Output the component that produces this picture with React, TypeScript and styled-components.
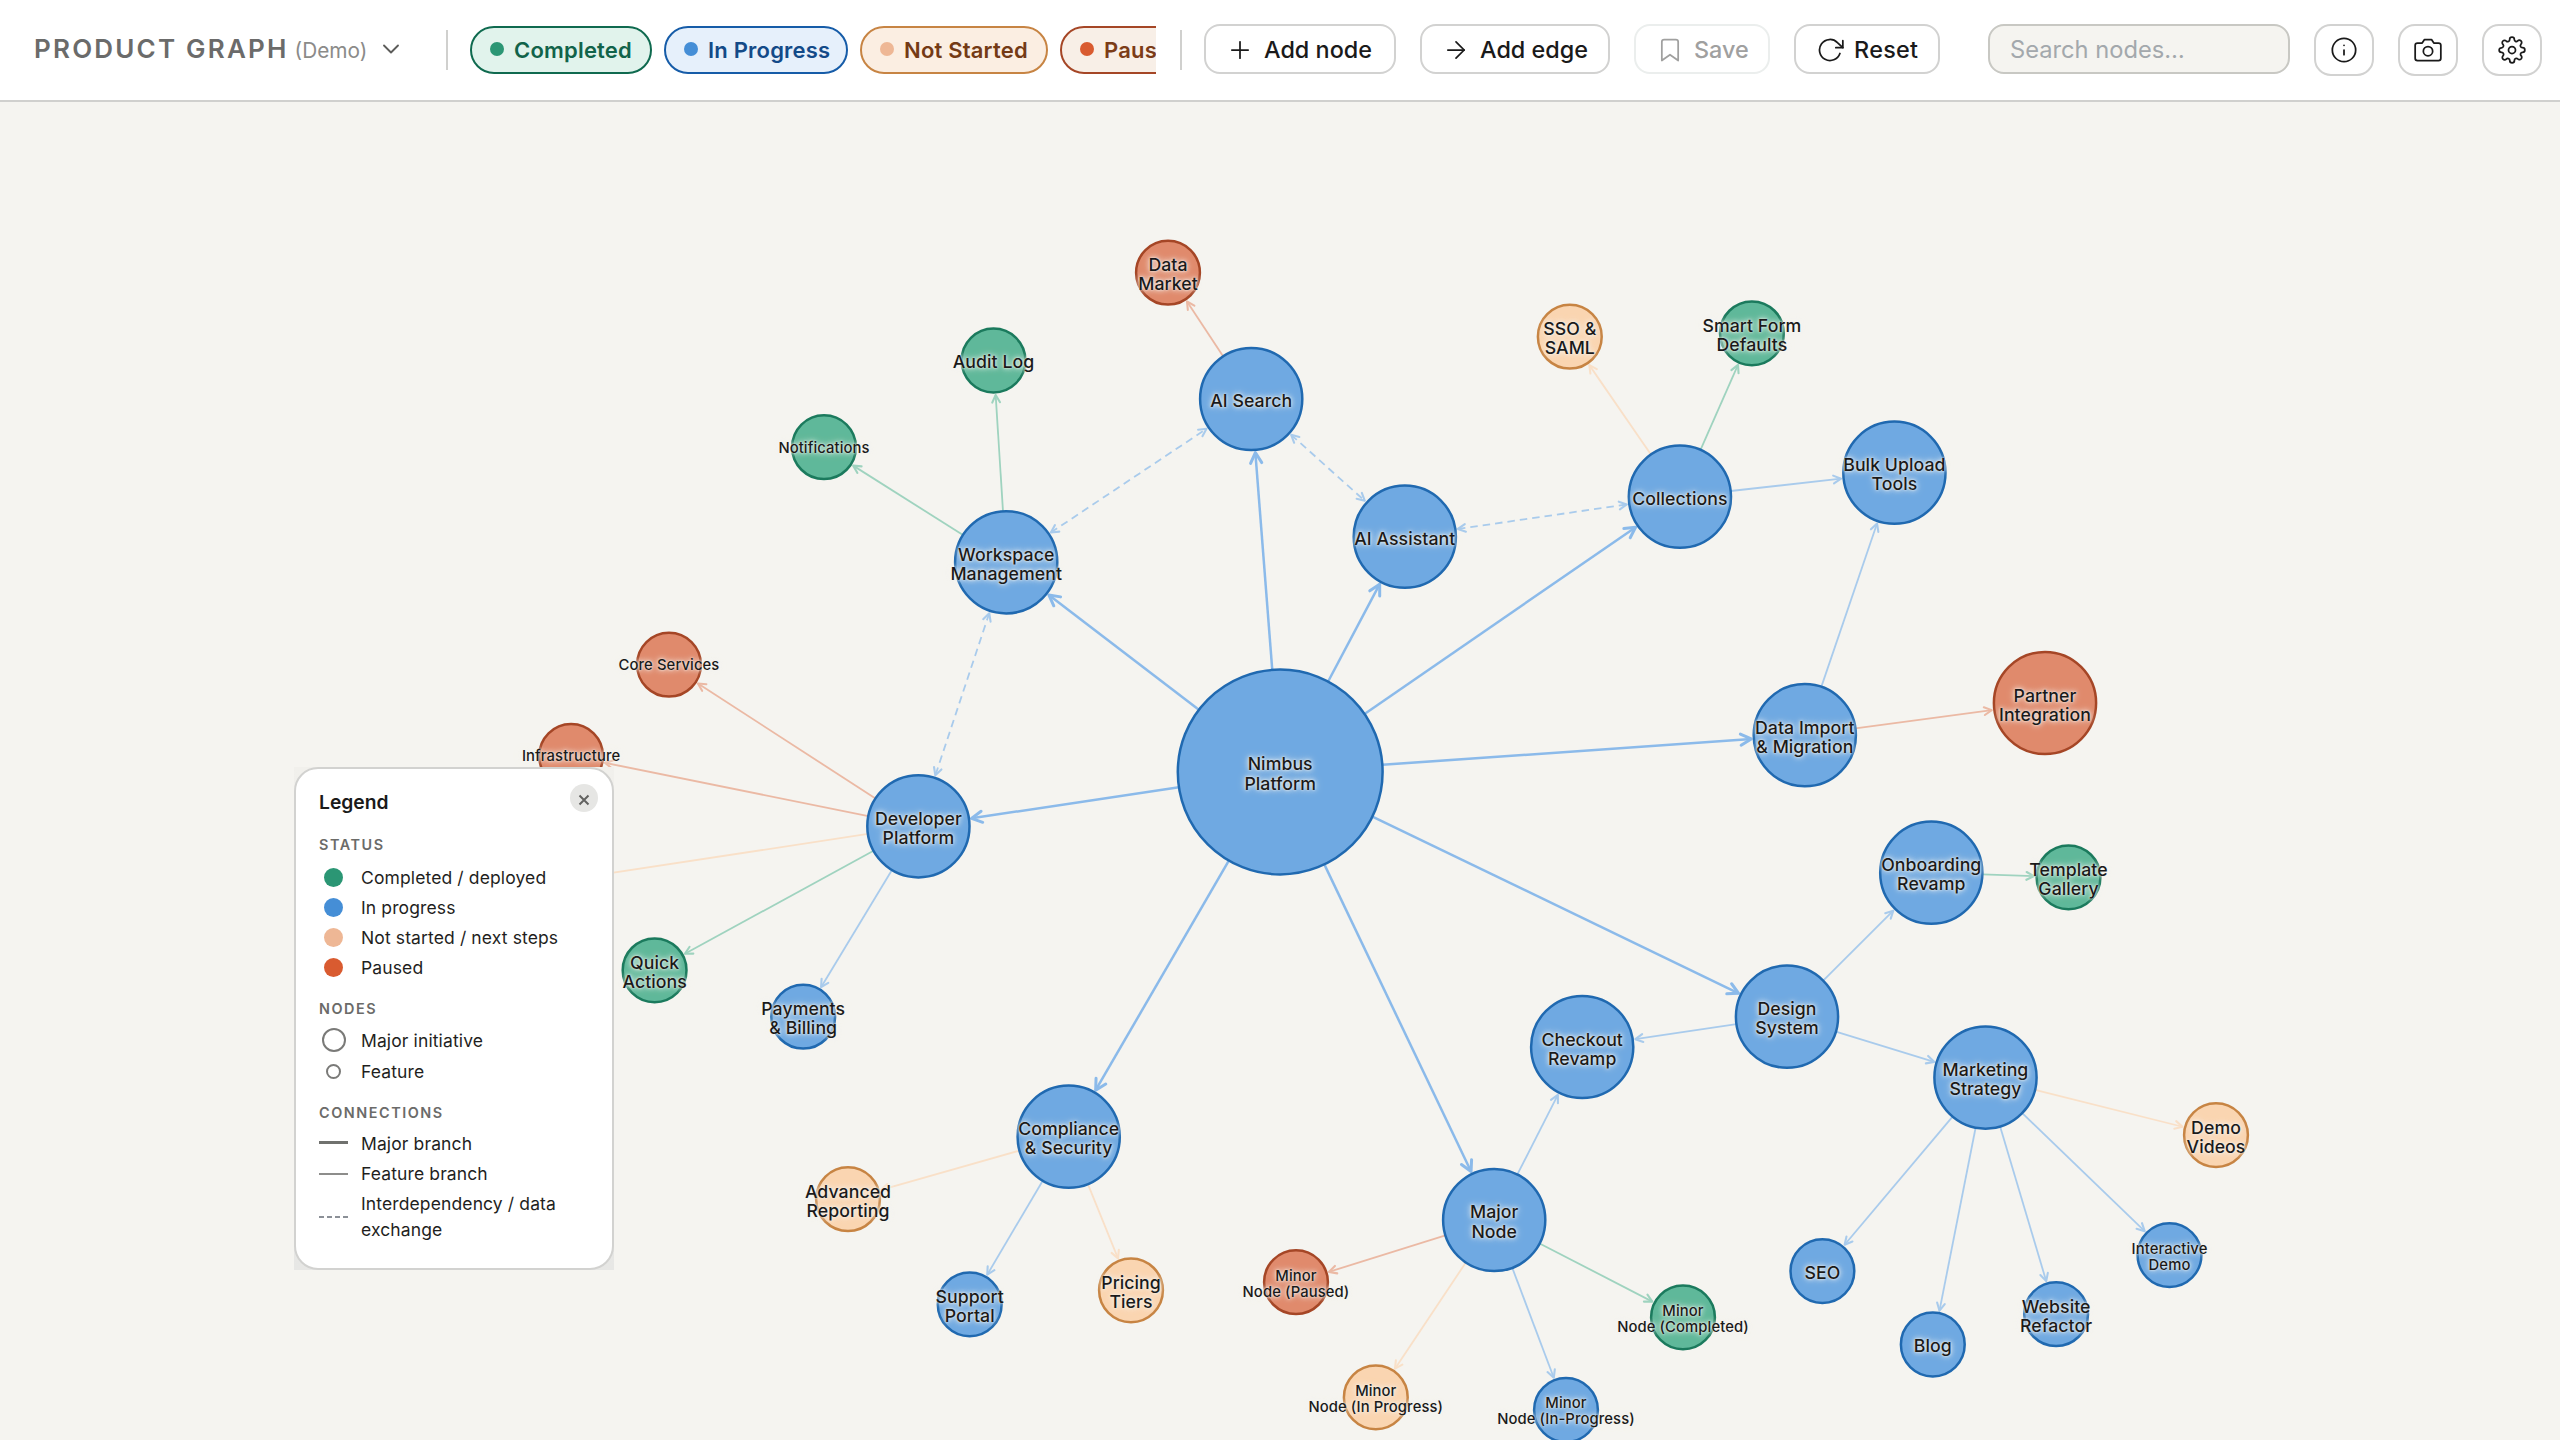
import React from "react";
import styled, { createGlobalStyle, css } from "styled-components";
import {
  FiArrowRight,
  FiBookmark,
  FiCamera,
  FiChevronDown,
  FiInfo,
  FiPlus,
  FiRotateCw,
  FiSettings,
} from "react-icons/fi";

type Status = "done" | "progress" | "todo" | "paused";
type Size = "root" | "major" | "minor";

const HEADER = 102;

const node: Record<Status, { fill: string; stroke: string; edge: string }> = {
  done: { fill: "#5fb89a", stroke: "#1b7a5d", edge: "#9fd3bf" },
  progress: { fill: "#6fa9e2", stroke: "#2069b0", edge: "#a9cbec" },
  todo: { fill: "#fad5b1", stroke: "#c78443", edge: "#f9e0c8" },
  paused: { fill: "#e08a6c", stroke: "#a54626", edge: "#ebb9a4" },
};

const dotColor: Record<Status, string> = {
  done: "#2b9674",
  progress: "#458ed6",
  todo: "#eeb795",
  paused: "#d95b30",
};

const chipTheme: Record<Status, { bg: string; line: string; text: string }> = {
  done: { bg: "#e1f3ec", line: "#0f6a4f", text: "#11634a" },
  progress: { bg: "#e6f0fb", line: "#165ca8", text: "#134a88" },
  todo: { bg: "#fbeee2", line: "#c78443", text: "#743a15" },
  paused: { bg: "#f8efe7", line: "#a54626", text: "#7c3c17" },
};

const radius: Record<Size, number> = { root: 102.4, major: 51.1, minor: 31.9 };

interface GraphNode {
  id: string;
  x: number;
  y: number;
  size: Size;
  status: Status;
  lines: string[];
  small?: boolean;
  lead?: number;
}

const n = (
  id: string,
  x: number,
  y: number,
  size: Size,
  status: Status,
  label: string,
  extra: { small?: boolean; lead?: number } = {}
): GraphNode => ({ id, x, y, size, status, lines: label.split("|"), ...extra });

const nodes: GraphNode[] = [
  n("root", 1280.2, 772, "root", "progress", "Nimbus|Platform", { lead: 20 }),
  n("search", 1251.2, 399, "major", "progress", "AI Search"),
  n("workspace", 1006.2, 562.3, "major", "progress", "Workspace|Management"),
  n("assistant", 1404.8, 536.7, "major", "progress", "AI Assistant"),
  n("collections", 1679.9, 496.7, "major", "progress", "Collections"),
  n("bulk", 1894.4, 472.7, "major", "progress", "Bulk Upload|Tools"),
  n("import", 1804.8, 735.2, "major", "progress", "Data Import|& Migration"),
  n("partner", 2045, 703, "major", "paused", "Partner|Integration"),
  n("dev", 918.4, 826.3, "major", "progress", "Developer|Platform"),
  n("compliance", 1068.7, 1136.7, "major", "progress", "Compliance|& Security"),
  n("majorNode", 1494.2, 1220, "major", "progress", "Major|Node", { lead: 20 }),
  n("checkout", 1582.2, 1047, "major", "progress", "Checkout|Revamp"),
  n("design", 1787, 1016.7, "major", "progress", "Design|System"),
  n("onboarding", 1931.3, 872.7, "major", "progress", "Onboarding|Revamp"),
  n("marketing", 1985.5, 1077.6, "major", "progress", "Marketing|Strategy"),
  n("market", 1168, 272.7, "minor", "paused", "Data|Market"),
  n("audit", 993.5, 360.5, "minor", "done", "Audit Log"),
  n("notifications", 824, 447.2, "minor", "done", "Notifications", { small: true }),
  n("sso", 1569.8, 336.7, "minor", "todo", "SSO &|SAML"),
  n("smart", 1751.9, 333.3, "minor", "done", "Smart Form|Defaults"),
  n("core", 669, 664.7, "minor", "paused", "Core Services", { small: true }),
  n("infra", 571.1, 755.9, "minor", "paused", "Infrastructure", { small: true }),
  n("api", 479, 893, "minor", "todo", ""),
  n("quick", 654.6, 970.3, "minor", "done", "Quick|Actions"),
  n("payments", 803.2, 1016.7, "minor", "progress", "Payments|& Billing"),
  n("reporting", 848, 1199.2, "minor", "todo", "Advanced|Reporting"),
  n("support", 969.7, 1304.4, "minor", "progress", "Support|Portal"),
  n("pricing", 1131, 1290.3, "minor", "todo", "Pricing|Tiers"),
  n("mPaused", 1296, 1282.2, "minor", "paused", "Minor|Node (Paused)", { small: true }),
  n("mTodo", 1375.8, 1397.4, "minor", "todo", "Minor|Node (In Progress)", { small: true }),
  n("mProgress", 1566, 1410, "minor", "progress", "Minor|Node (In-Progress)", { small: true }),
  n("mDone", 1683, 1317.4, "minor", "done", "Minor|Node (Completed)", { small: true }),
  n("template", 2068.5, 877.3, "minor", "done", "Template|Gallery"),
  n("videos", 2216, 1135.1, "minor", "todo", "Demo|Videos"),
  n("interactive", 2169.5, 1255.1, "minor", "progress", "Interactive|Demo", { small: true }),
  n("seo", 1822.4, 1271.1, "minor", "progress", "SEO"),
  n("blog", 1932.8, 1344.5, "minor", "progress", "Blog"),
  n("website", 2056.1, 1314.2, "minor", "progress", "Website|Refactor"),
];

const byId = Object.fromEntries(nodes.map((item) => [item.id, item]));

const majorEdges = ["search", "workspace", "assistant", "collections", "import", "dev", "compliance", "majorNode", "design"];

const featureEdges: [string, string][] = [
  ["search", "market"],
  ["workspace", "audit"],
  ["workspace", "notifications"],
  ["collections", "sso"],
  ["collections", "smart"],
  ["collections", "bulk"],
  ["import", "bulk"],
  ["import", "partner"],
  ["dev", "core"],
  ["dev", "infra"],
  ["dev", "api"],
  ["dev", "quick"],
  ["dev", "payments"],
  ["compliance", "reporting"],
  ["compliance", "support"],
  ["compliance", "pricing"],
  ["majorNode", "mPaused"],
  ["majorNode", "mTodo"],
  ["majorNode", "mProgress"],
  ["majorNode", "mDone"],
  ["majorNode", "checkout"],
  ["design", "checkout"],
  ["design", "onboarding"],
  ["design", "marketing"],
  ["onboarding", "template"],
  ["marketing", "videos"],
  ["marketing", "interactive"],
  ["marketing", "website"],
  ["marketing", "blog"],
  ["marketing", "seo"],
];

const dependencyEdges: [string, string][] = [
  ["workspace", "search"],
  ["search", "assistant"],
  ["assistant", "collections"],
  ["workspace", "dev"],
];

const GlobalStyle = createGlobalStyle`
  * { box-sizing: border-box; }
  html, body { margin: 0; padding: 0; overflow: hidden; background: #f5f4f0; }
  body { font-family: Inter, "Liberation Sans", sans-serif; color: #1a1a1a; }
  button, input { font-family: inherit; margin: 0; }
`;

const Page = styled.div`
  display: flex;
  flex-direction: column;
  width: 2560px;
  height: 1440px;
  overflow: hidden;
  background: #f5f4f0;
`;

const Header = styled.header`
  display: flex;
  align-items: center;
  flex: none;
  height: ${HEADER}px;
  padding: 0 18px 0 34px;
  background: #fff;
  border-bottom: 2px solid #d0d0ce;
`;

const Brand = styled.div`
  display: flex;
  align-items: center;
  flex: none;
  width: 412px;
  padding-bottom: 3px;
  color: #6b6b6a;
  svg { width: 28px; height: 28px; stroke-width: 1.6; color: #5c5c5a; margin-left: 10px; }
`;

const BrandText = styled.div`
  display: flex;
  align-items: baseline;
  white-space: nowrap;
`;

const BrandName = styled.h1`
  margin: 0;
  font-size: 26px;
  line-height: 32px;
  font-weight: 600;
  letter-spacing: 2.2px;
`;

const BrandNote = styled.span`
  margin-left: 6px;
  font-size: 20.8px;
  color: #8b8b89;
`;

const Divider = styled.i`
  flex: none;
  width: 2px;
  height: 40px;
  background: #d0d0ce;
`;

const Chips = styled.div`
  display: flex;
  gap: 12px;
  flex: none;
  width: 686px;
  margin: 0 24px 0 22px;
  overflow: hidden;
`;

const Chip = styled.button<{ $status: Status; $width: number }>`
  display: flex;
  align-items: center;
  gap: 10px;
  flex: none;
  width: ${(p) => p.$width}px;
  height: 48px;
  padding: 0 0 1px 18px;
  border: 2px solid ${(p) => chipTheme[p.$status].line};
  border-radius: 24px;
  background: ${(p) => chipTheme[p.$status].bg};
  color: ${(p) => chipTheme[p.$status].text};
  font-size: 22px;
  font-weight: 600;
  letter-spacing: 0.2px;
  white-space: nowrap;
`;

const Dot = styled.i<{ $status: Status; $size: number }>`
  flex: none;
  width: ${(p) => p.$size}px;
  height: ${(p) => p.$size}px;
  margin-bottom: 1px;
  border-radius: 50%;
  background: ${(p) => dotColor[p.$status]};
`;

const Actions = styled.div`
  display: flex;
  gap: 24px;
  flex: none;
  margin-left: 22px;
`;

const ActionButton = styled.button<{ $width: number; $muted?: boolean; $tracking?: number }>`
  display: flex;
  align-items: center;
  gap: 10px;
  flex: none;
  width: ${(p) => p.$width}px;
  height: 50px;
  margin-bottom: 2px;
  padding: 0 0 0 20px;
  border: 2px solid ${(p) => (p.$muted ? "#ebeeed" : "#d2d2d1")};
  border-radius: 16px;
  background: #fff;
  color: ${(p) => (p.$muted ? "#a0a09f" : "#1a1a1a")};
  font-size: 23.4px;
  font-weight: 500;
  letter-spacing: ${(p) => p.$tracking ?? 0}px;
  white-space: nowrap;
  svg { flex: none; width: 28px; height: 28px; margin-top: 2px; stroke-width: 1.5; }
`;

const Search = styled.input`
  flex: none;
  width: 302px;
  height: 50px;
  margin: 0 24px 2px 48px;
  padding: 0 20px;
  border: 2px solid #c8c8c3;
  border-radius: 16px;
  background: #f5f4f0;
  font-size: 23.7px;
  outline: none;
  &::placeholder { color: #a3a8ac; opacity: 1; }
`;

const IconButton = styled.button`
  display: grid;
  place-items: center;
  flex: none;
  width: 60px;
  height: 52px;
  padding: 0;
  border: 2px solid #d2d2d1;
  border-radius: 17px;
  background: #fff;
  color: #1a1a1a;
  & + & { margin-left: 24px; }
  svg { width: 28px; height: 28px; stroke-width: 1.5; }
`;

const Canvas = styled.main`
  position: relative;
  flex: 1;
  overflow: hidden;
`;

const GraphLayer = styled.svg`
  display: block;
  width: 2560px;
  height: ${1440 - HEADER}px;
`;

const NodeLabel = styled.div<{ $small?: boolean; $lead: number }>`
  position: absolute;
  transform: translate(-50%, -50%);
  text-align: center;
  white-space: nowrap;
  font-weight: 500;
  font-size: ${(p) => (p.$small ? 14.8 : 17.7)}px;
  line-height: ${(p) => p.$lead}px;
  letter-spacing: ${(p) => (p.$small ? 0.1 : 0.06)}px;
  color: #1a1a1a;
  text-shadow:
    0 0 2px #f5f4f0,
    0 0 5px #f5f4f0,
    0 0 8px rgba(245, 244, 240, 0.7);
`;

const LegendFrame = styled.aside`
  position: absolute;
  left: 294px;
  top: ${767 - HEADER}px;
  width: 320px;
  height: 503px;
  background: linear-gradient(#f1f0ec, #e7e7e5);
`;

const LegendPanel = styled.div`
  display: flex;
  flex-direction: column;
  height: 100%;
  padding: 19px 0 0 23px;
  border: 2px solid #d2d2d0;
  border-radius: 24px;
  background: #fff;
`;

const LegendHead = styled.div`
  display: flex;
  justify-content: space-between;
  height: 47px;
  padding-right: 14px;
`;

const LegendTitle = styled.h2`
  margin: 1px 0 0;
  font-size: 19.3px;
  line-height: 26px;
  font-weight: 600;
`;

const CloseButton = styled.button`
  display: grid;
  place-items: center;
  width: 28px;
  height: 28px;
  margin-top: -4px;
  padding: 4px 0 0;
  border: 0;
  border-radius: 50%;
  background: #e6e6e4;
  color: #626260;
`;

const LegendHeading = styled.h3<{ $top: number }>`
  margin: ${(p) => p.$top}px 0 0;
  font-size: 14.4px;
  line-height: 20px;
  font-weight: 600;
  letter-spacing: 1.55px;
  color: #6b6b69;
`;

const LegendRows = styled.div<{ $top: number; $gap?: number }>`
  display: flex;
  flex-direction: column;
  gap: ${(p) => p.$gap ?? 4}px;
  margin-top: ${(p) => p.$top}px;
`;

const LegendRow = styled.div`
  display: flex;
  align-items: center;
  gap: 14px;
  font-size: 17.5px;
  line-height: 26px;
  letter-spacing: 0.12px;
  color: #1f1f1e;
`;

const Swatch = styled.span`
  display: grid;
  place-items: center;
  flex: none;
  width: 28px;
  height: 24px;
`;

const Ring = styled.i<{ $size: number }>`
  width: ${(p) => p.$size}px;
  height: ${(p) => p.$size}px;
  margin: -2px 0 0 1px;
  border: 2px solid #7a7a78;
  border-radius: 50%;
`;

const Rule = styled.i<{ $kind: "major" | "feature" | "dependency" }>`
  width: 29px;
  margin-bottom: 1px;
  ${(p) =>
    p.$kind === "major"
      ? css`height: 3px; margin-bottom: 3px; background: #70716e;`
      : p.$kind === "feature"
      ? css`height: 2px; background: #8d8d8b;`
      : css`height: 2px; background: repeating-linear-gradient(90deg, #8b9097 0 5px, transparent 5px 8px);`}
`;

const headPath = (x: number, y: number, ux: number, uy: number, len: number, half: number) => {
  const bx = x - ux * len;
  const by = y - uy * len;
  return `M${bx - uy * half} ${by + ux * half}L${x} ${y}L${bx + uy * half} ${by - ux * half}`;
};

function Edge({ from, to, kind }: { from: string; to: string; kind: "major" | "feature" | "dependency" }) {
  const a = byId[from];
  const b = byId[to];
  const d = Math.hypot(b.x - a.x, b.y - a.y);
  const ux = (b.x - a.x) / d;
  const uy = (b.y - a.y) / d;
  const gapStart = radius[a.size] + (kind === "dependency" ? 2.6 : 0);
  const gapEnd = radius[b.size] + 2.6;
  const x1 = a.x + ux * gapStart;
  const y1 = a.y + uy * gapStart;
  const x2 = b.x - ux * gapEnd;
  const y2 = b.y - uy * gapEnd;
  const major = kind === "major";
  const color = major ? "#8bbaea" : node[b.status].edge;
  const len = major ? 10.5 : 7.5;
  const half = major ? 5.6 : 3.9;
  return (
    <g fill="none" stroke={color} strokeWidth={major ? 2.5 : 1.8}>
      <path d={`M${x1} ${y1}L${x2} ${y2}`} strokeDasharray={kind === "dependency" ? "7.5 5" : undefined} />
      <g strokeWidth={major ? 3 : 2.1} strokeLinecap="round" strokeLinejoin="round">
        <path d={headPath(x2, y2, ux, uy, len, half)} />
        {kind === "dependency" && <path d={headPath(x1, y1, -ux, -uy, len, half)} />}
      </g>
    </g>
  );
}

function labelOffset(item: GraphNode) {
  if (item.lines.length > 1) return item.small ? 1.4 : 1.5;
  return item.small ? 0.4 : 0.8;
}

function Graph() {
  return (
    <>
      <GraphLayer viewBox={`0 ${HEADER} 2560 ${1440 - HEADER}`}>
        {featureEdges.map(([from, to]) => (
          <Edge key={from + to} from={from} to={to} kind="feature" />
        ))}
        {dependencyEdges.map(([from, to]) => (
          <Edge key={from + to} from={from} to={to} kind="dependency" />
        ))}
        {majorEdges.map((to) => (
          <Edge key={to} from="root" to={to} kind="major" />
        ))}
        {nodes.map((item) => (
          <circle
            key={item.id}
            cx={item.x}
            cy={item.y}
            r={radius[item.size]}
            fill={node[item.status].fill}
            stroke={node[item.status].stroke}
            strokeWidth={2.5}
          />
        ))}
      </GraphLayer>
      {nodes.map((item) => (
        <NodeLabel
          key={item.id}
          $small={item.small}
          $lead={item.lead ?? (item.small ? 16 : 19)}
          style={{ left: item.x, top: item.y - HEADER + labelOffset(item) }}
        >
          {item.lines.map((line) => (
            <div key={line}>{line}</div>
          ))}
        </NodeLabel>
      ))}
    </>
  );
}

function Legend() {
  const statuses: [Status, string][] = [
    ["done", "Completed / deployed"],
    ["progress", "In progress"],
    ["todo", "Not started / next steps"],
    ["paused", "Paused"],
  ];
  return (
    <LegendFrame>
      <LegendPanel>
        <LegendHead>
          <LegendTitle>Legend</LegendTitle>
          <CloseButton aria-label="Close legend">
            <svg width="12" height="12" viewBox="0 0 12 12" stroke="currentColor" strokeWidth="2">
              <path d="M1.5 1.5l9 9M10.5 1.5l-9 9" />
            </svg>
          </CloseButton>
        </LegendHead>
        <LegendHeading $top={0}>STATUS</LegendHeading>
        <LegendRows $top={10}>
          {statuses.map(([status, text]) => (
            <LegendRow key={status}>
              <Swatch>
                <Dot $status={status} $size={19} />
              </Swatch>
              {text}
            </LegendRow>
          ))}
        </LegendRows>
        <LegendHeading $top={18}>NODES</LegendHeading>
        <LegendRows $top={9} $gap={5}>
          <LegendRow>
            <Swatch>
              <Ring $size={24} />
            </Swatch>
            Major initiative
          </LegendRow>
          <LegendRow>
            <Swatch>
              <Ring $size={15} />
            </Swatch>
            Feature
          </LegendRow>
        </LegendRows>
        <LegendHeading $top={18}>CONNECTIONS</LegendHeading>
        <LegendRows $top={8}>
          <LegendRow>
            <Swatch>
              <Rule $kind="major" />
            </Swatch>
            Major branch
          </LegendRow>
          <LegendRow>
            <Swatch>
              <Rule $kind="feature" />
            </Swatch>
            Feature branch
          </LegendRow>
          <LegendRow>
            <Swatch>
              <Rule $kind="dependency" />
            </Swatch>
            <span>
              Interdependency / data
              <br />
              exchange
            </span>
          </LegendRow>
        </LegendRows>
      </LegendPanel>
    </LegendFrame>
  );
}

export default function App() {
  return (
    <Page>
      <GlobalStyle />
      <Header>
        <Brand>
          <BrandText>
            <BrandName>PRODUCT GRAPH</BrandName>
            <BrandNote>(Demo)</BrandNote>
          </BrandText>
          <FiChevronDown />
        </Brand>
        <Divider />
        <Chips>
          <Chip $status="done" $width={182}>
            <Dot $status="done" $size={14} />
            Completed
          </Chip>
          <Chip $status="progress" $width={184}>
            <Dot $status="progress" $size={14} />
            In Progress
          </Chip>
          <Chip $status="todo" $width={188}>
            <Dot $status="todo" $size={14} />
            Not Started
          </Chip>
          <Chip $status="paused" $width={140}>
            <Dot $status="paused" $size={14} />
            Paused
          </Chip>
        </Chips>
        <Divider />
        <Actions>
          <ActionButton $width={192}>
            <FiPlus />
            Add node
          </ActionButton>
          <ActionButton $width={190}>
            <FiArrowRight />
            Add edge
          </ActionButton>
          <ActionButton $width={136} $muted>
            <FiBookmark />
            Save
          </ActionButton>
          <ActionButton $width={146} $tracking={0.3}>
            <FiRotateCw />
            Reset
          </ActionButton>
        </Actions>
        <Search placeholder="Search nodes…" />
        <IconButton aria-label="Info">
          <FiInfo />
        </IconButton>
        <IconButton aria-label="Screenshot">
          <FiCamera />
        </IconButton>
        <IconButton aria-label="Settings">
          <FiSettings />
        </IconButton>
      </Header>
      <Canvas>
        <Graph />
        <Legend />
      </Canvas>
    </Page>
  );
}
